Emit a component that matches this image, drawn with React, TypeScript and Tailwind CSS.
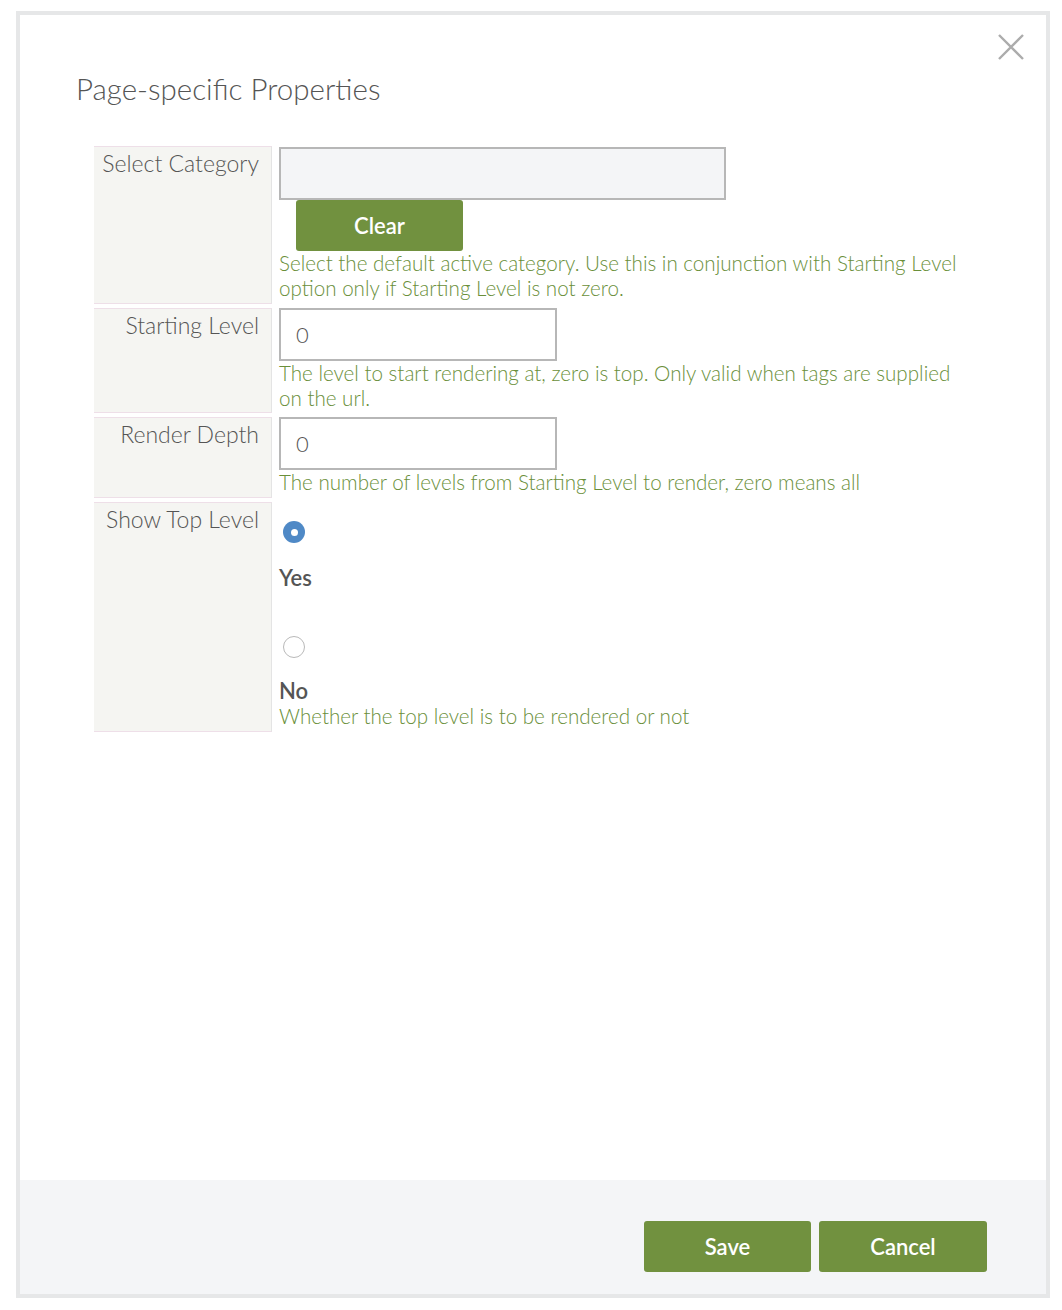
import React from 'react';

const labelCell =
  'bg-[#f5f5f2] border-y border-y-[#eedfe8] border-r border-r-[#e4e4e4] text-right pr-[12px] pt-[3px] text-[23px] leading-[26px] font-light text-[#555]';

const helpText = 'text-[20.6px] leading-[25px] font-light text-[#6a8f3a]';

function Radio({ checked }: { checked: boolean }) {
  return checked ? (
    <span className="w-[22px] h-[22px] rounded-full bg-[#4f89c6] flex items-center justify-center">
      <span className="w-[7px] h-[7px] rounded-full bg-white" />
    </span>
  ) : (
    <span className="w-[22px] h-[22px] rounded-full bg-white border border-[#b9b9b9]" />
  );
}

export default function App() {
  return (
    <div
      className="w-full h-[1310px] bg-white pt-[11px] pl-[16px]"
      style={{ fontFamily: 'Lato, "Open Sans", sans-serif' }}
    >
      <div className="w-[1034px] h-[1287px] border-4 border-[#e6e7e8] flex flex-col bg-white">
        {/* Body */}
        <div className="relative flex-1 pt-[56px] px-[56px]">
          <button className="absolute right-[22px] top-[19px] w-[26px] h-[26px]">
            <svg viewBox="0 0 26 26" className="w-[26px] h-[26px]">
              <path d="M1 1 L25 25 M25 1 L1 25" stroke="#acacac" strokeWidth="2.4" fill="none" />
            </svg>
          </button>

          <h2 className="text-[29.5px] leading-[35px] text-[#555] font-light">Page-specific Properties</h2>

          <div className="ml-[18px] mt-[40px] grid grid-cols-[178px_692px] gap-x-[5px] gap-y-[4px]">
            {/* Select Category */}
            <div className={labelCell}>Select Category</div>
            <div className="pl-[2px] pt-[1px] pb-[3px]">
              <div className="w-[447px] h-[53px] bg-[#f4f5f7] border-2 border-[#b7b7b7]" />
              <button className="ml-[17px] w-[167px] h-[51px] rounded-[3px] bg-[#71913f] text-white text-[22px] font-semibold">
                Clear
              </button>
              <p className={helpText}>
                Select the default active category. Use this in conjunction with Starting Level option only if
                Starting Level is not zero.
              </p>
            </div>

            {/* Starting Level */}
            <div className={labelCell}>Starting Level</div>
            <div className="pl-[2px] pb-[2px]">
              <div className="w-[278px] h-[53px] bg-white border-2 border-[#b7b7b7] pl-[15px] flex items-center text-[22px] font-light text-[#555]">
                0
              </div>
              <p className={helpText}>
                The level to start rendering at, zero is top. Only valid when tags are supplied on the url.
              </p>
            </div>

            {/* Render Depth */}
            <div className={labelCell}>Render Depth</div>
            <div className="pl-[2px] pb-[3px]">
              <div className="w-[278px] h-[53px] bg-white border-2 border-[#b7b7b7] pl-[15px] flex items-center text-[22px] font-light text-[#555]">
                0
              </div>
              <p className={helpText}>The number of levels from Starting Level to render, zero means all</p>
            </div>

            {/* Show Top Level */}
            <div className={labelCell}>Show Top Level</div>
            <div className="pl-[2px] pb-[3px]">
              <div className="pt-[19px] pl-[4px] flex">
                <Radio checked />
              </div>
              <div className="mt-[22px] text-[22px] leading-[26px] font-semibold text-[#555]">Yes</div>
              <div className="mt-[45px] pl-[4px] flex">
                <Radio checked={false} />
              </div>
              <div className="mt-[20px] text-[22px] leading-[26px] font-semibold text-[#555]">No</div>
              <p className={helpText}>Whether the top level is to be rendered or not</p>
            </div>
          </div>
        </div>

        {/* Footer */}
        <div className="h-[114px] bg-[#f4f5f7] flex justify-end items-start pt-[41px] pr-[59px] gap-[8px]">
          <button className="w-[167px] h-[51px] rounded-[3px] bg-[#71913f] text-white text-[22px] font-semibold">
            Save
          </button>
          <button className="w-[168px] h-[51px] rounded-[3px] bg-[#71913f] text-white text-[22px] font-semibold">
            Cancel
          </button>
        </div>
      </div>
    </div>
  );
}
